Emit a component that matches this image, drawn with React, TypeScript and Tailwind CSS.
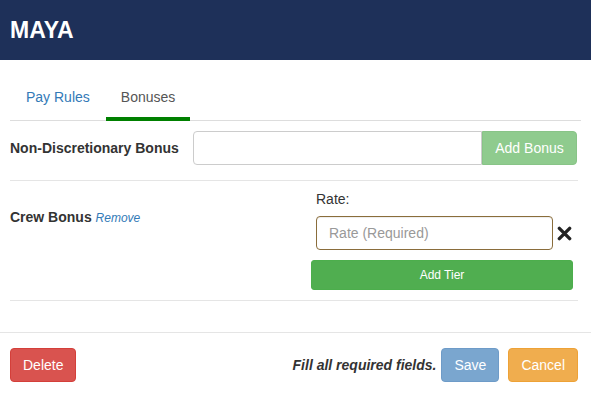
import React from "react";

export default function App() {
  return (
    <div className="w-[591px] h-[395px] bg-white overflow-hidden text-[14px] text-[#333] leading-[20px]" style={{ fontFamily: '"Liberation Sans", Arial, Helvetica, sans-serif' }}>
      <div className="h-[60px] bg-[#1e3059] px-[10px] flex items-center">
        <h1 className="text-white text-[23px] font-bold leading-none pt-[1px]">MAYA</h1>
      </div>
      <div className="pl-[10px] pr-[10px] pt-[20px]">
        <ul className="flex border-b border-[#ddd]">
          <li className="h-[40px] px-[16px] mr-[0px] pt-[7px] text-[#337ab7]">Pay Rules</li>
          <li className="h-[41px] -mb-[1px] px-[15px] pt-[7px] text-[#555] border-b-[4px] border-[#008000]">Bonuses</li>
        </ul>
        <div className="mr-[3px] flex items-center pt-[10px] pb-[15px] border-b border-[#e5e5e5]">
          <div className="w-[183px] font-bold">Non-Discretionary Bonus</div>
          <div className="flex">
            <input className="w-[289px] h-[34px] border border-[#ccc] rounded-l-[4px] px-[12px] outline-none" />
            <button className="w-[95px] h-[34px] bg-[#8fcb8e] text-white rounded-r-[4px] border border-[#88c487]">Add Bonus</button>
          </div>
        </div>
        <div className="mr-[3px] flex border-b border-[#e5e5e5] pb-[10px]">
          <div className="w-[301px] pt-[26px]">
            <span className="font-bold">Crew Bonus</span>{" "}
            <a className="italic text-[12px] text-[#337ab7]">Remove</a>
          </div>
          <div className="w-[262px] pt-[8px]">
            <div className="pl-[5px]">
              <div className="mb-[7px]">Rate:</div>
              <div className="flex items-center">
                <input
                  placeholder="Rate (Required)"
                  className="w-[237px] h-[34px] border border-[#8a6d3b] rounded-[4px] px-[12px] outline-none placeholder:text-[#999] shadow-[inset_0_1px_1px_rgba(0,0,0,0.075)]"
                />
                <svg className="ml-[4px]" width="15" height="15" viewBox="0 0 16 16">
                  <path d="M2.5 2.5 L13.5 13.5 M13.5 2.5 L2.5 13.5" stroke="#222" strokeWidth="3.6" strokeLinecap="round" />
                </svg>
              </div>
            </div>
            <button className="mt-[10px] w-[262px] h-[30px] bg-[#50ae50] border border-[#4cae4c] rounded-[3px] text-white text-[12px]">Add Tier</button>
          </div>
        </div>
      </div>
      <div className="mt-[31px] border-t border-[#e5e5e5] pt-[15px] pl-[10px] pr-[13px] flex items-center">
        <button className="h-[34px] px-[12px] bg-[#d9534f] border border-[#d43f3a] rounded-[4px] text-white">Delete</button>
        <div className="ml-auto flex items-center">
          <span className="italic font-bold mr-[5px]">Fill all required fields.</span>
          <button className="h-[34px] px-[12px] bg-[#7aa6cf] border border-[#6e9bc8] rounded-[4px] text-white">Save</button>
          <button className="ml-[9px] h-[34px] px-[12px] bg-[#f0ad4e] border border-[#eea236] rounded-[4px] text-white">Cancel</button>
        </div>
      </div>
    </div>
  );
}
